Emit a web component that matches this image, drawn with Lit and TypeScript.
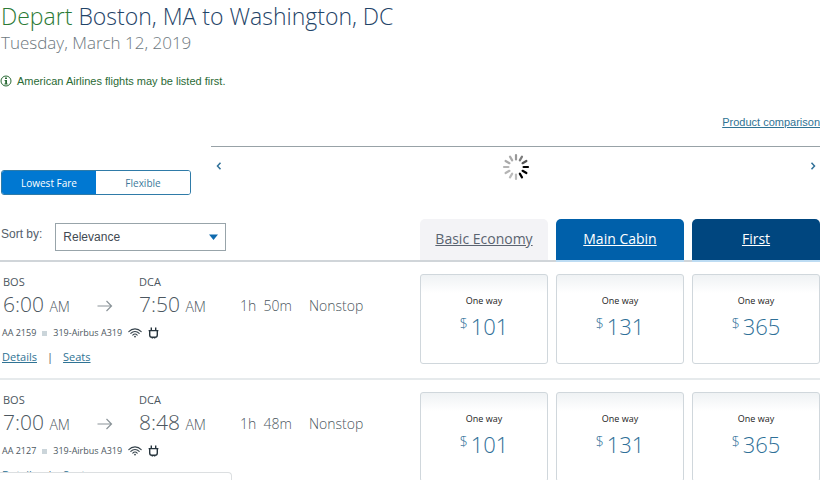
import { LitElement, html, css, svg } from "lit";
import { customElement, property, state } from "lit/decorators.js";
import { classMap } from "lit/directives/class-map.js";

interface Flight {
  from: string;
  to: string;
  departs: string;
  arrives: string;
  duration: string;
  number: string;
  aircraft: string;
  fares: number[];
}

const FLIGHTS: Flight[] = [
  { from: "BOS", to: "DCA", departs: "6:00", arrives: "7:50", duration: "1h  50m", number: "AA 2159", aircraft: "319-Airbus A319", fares: [101, 131, 365] },
  { from: "BOS", to: "DCA", departs: "7:00", arrives: "8:48", duration: "1h  48m", number: "AA 2127", aircraft: "319-Airbus A319", fares: [101, 131, 365] },
];

const CABINS = [
  { name: "Basic Economy", tone: "basic" },
  { name: "Main Cabin", tone: "main" },
  { name: "First", tone: "first" },
];

const SPOKE_COLORS = ["#999", "#7c7c7c", "#555", "#000", "#000", "#000", "#bbb", "#bbb", "#b4b4b4", "#b4b4b4", "#aaa", "#aaa"];

@customElement("flight-row")
export class FlightRow extends LitElement {
  @property({ attribute: false }) flight!: Flight;

  static styles = css`
    :host {
      display: grid;
      grid-template-columns: minmax(0, 1fr) repeat(3, 128px);
      column-gap: 8px;
      align-items: start;
      border-bottom: 2px solid #e6eaec;
      padding: 12px 0;
      color: #4c5760;
    }
    .info { padding-left: 2px; }
    .times {
      display: grid;
      grid-template-columns: 94px 42px 101px 69px auto;
      align-items: end;
      padding-left: 1px;
    }
    .stop { display: flex; flex-direction: column; }
    .code { font-size: 11px; line-height: 16px; }
    .time { font-size: 21px; line-height: 28px; font-weight: 300; white-space: nowrap; }
    .ampm { font-size: 14px; line-height: 20px; }
    .arrow { height: 24px; display: flex; align-items: center; }
    .summary { font-size: 14px; line-height: 24px; font-weight: 300; white-space: pre; }
    .plane {
      display: flex;
      align-items: center;
      gap: 6px;
      margin-top: 5px;
      font-size: 9px;
      line-height: 20px;
    }
    .dot { width: 5px; height: 5px; background: #cbd5da; }
    .links {
      display: flex;
      gap: 10px;
      margin-top: 5px;
      font-size: 11px;
      line-height: 18px;
    }
    a { color: #2f7394; }
    .fare {
      height: 90px;
      padding: 0 0 4px;
      border: 1px solid #d0d7dc;
      border-radius: 3px;
      background: linear-gradient(#eff2f4, #fff 18px);
      font-family: inherit;
      color: #222;
      display: flex;
      flex-direction: column;
      align-items: center;
      justify-content: center;
      cursor: pointer;
    }
    .label { font-size: 9px; line-height: 14px; }
    .price {
      display: flex;
      gap: 3px;
      margin-top: 3px;
      font-size: 22px;
      line-height: 30px;
      font-weight: 300;
      color: #2f7098;
    }
    .currency { font-size: 14px; line-height: 26px; }
  `;

  render() {
    const f = this.flight;
    return html`
      <div class="info">
        <div class="times">
          <div class="stop">
            <span class="code">${f.from}</span>
            <span class="time">${f.departs} <span class="ampm">AM</span></span>
          </div>
          <span class="arrow">
            <svg width="16" height="12" viewBox="0 0 16 12" fill="none" stroke="#8b9499" stroke-width="1.2" aria-hidden="true">
              <path d="M0.5 6H14.5M9.5 1L14.5 6L9.5 11" />
            </svg>
          </span>
          <div class="stop">
            <span class="code">${f.to}</span>
            <span class="time">${f.arrives} <span class="ampm">AM</span></span>
          </div>
          <span class="summary">${f.duration}</span>
          <span class="summary">Nonstop</span>
        </div>
        <div class="plane">
          <span>${f.number}</span>
          <span class="dot"></span>
          <span>${f.aircraft}</span>
          <svg width="14" height="10" viewBox="0 0 14 10" fill="none" stroke="#36434c" stroke-width="1.1" stroke-linecap="round" role="img" aria-label="Wi-Fi">
            <path d="M0.8 3.6C4.2 -0.1 9.8 -0.1 13.2 3.6M2.8 5.4C5.2 2.8 8.8 2.8 11.2 5.4M4.8 7.1C6.1 5.7 7.9 5.7 9.2 7.1" />
            <circle cx="7" cy="8.6" r="0.9" fill="#36434c" stroke="none" />
          </svg>
          <svg width="11" height="12" viewBox="0 0 11 12" fill="none" stroke="#27343d" stroke-width="1.4" role="img" aria-label="Power outlet">
            <path d="M3.3 0.6V3.4M7.7 0.6V3.4M0.6 3.6H10.4M1.7 3.6V8Q1.7 10.2 3.9 10.2H7.1Q9.3 10.2 9.3 8V3.6M4.4 10.2V11.4M6.6 10.2V11.4" />
          </svg>
        </div>
        <div class="links">
          <a href="#details">Details</a><span>|</span><a href="#seats">Seats</a>
        </div>
      </div>
      ${f.fares.map(
        (amount) => html`<button class="fare" type="button">
          <span class="label">One way</span>
          <span class="price"><span class="currency">$</span>${amount}</span>
        </button>`
      )}
    `;
  }
}

@customElement("app-root")
export class AppRoot extends LitElement {
  @state() private fareType = "Lowest Fare";

  static styles = css`
    :host {
      display: block;
      position: relative;
      height: 100vh;
      overflow: hidden;
      background: #fff;
      color: #54606a;
      font-family: "Open Sans", "Noto Sans", sans-serif;
    }
    h1 { margin: 0; padding-left: 1px; font-size: 23px; line-height: 32px; font-weight: 300; color: #1f4468; }
    .depart { color: #2b7a35; }
    .date { margin: 0; padding-left: 1px; font-size: 17px; line-height: 22px; font-weight: 300; color: #6d787e; }
    .notice {
      display: flex;
      align-items: center;
      gap: 5px;
      margin: 19px 0 0;
      font: 11px/16px "Liberation Sans", Arial, sans-serif;
      color: #2a6a35;
    }
    .compare {
      display: flex;
      justify-content: flex-end;
      margin-top: 25px;
      font: 11px/16px "Liberation Sans", Arial, sans-serif;
    }
    .compare a { color: #2f7394; white-space: nowrap; }
    .dates {
      display: grid;
      grid-template-columns: 191px minmax(0, 1fr);
      column-gap: 20px;
      margin-top: 16px;
    }
    .toggle {
      display: grid;
      grid-template-columns: 1fr 1fr;
      margin: 24px 0 0 1px;
      height: 25px;
      box-sizing: border-box;
      border: 1px solid #2f7ba8;
      border-radius: 3px;
      overflow: hidden;
    }
    .option {
      border: 0;
      padding: 0;
      background: #fff;
      color: #3d789b;
      font: 10px/16px "Open Sans", "Noto Sans", sans-serif;
      cursor: pointer;
    }
    .option.on { background: #0078d2; color: #fff; font-weight: 500; }
    .carousel {
      display: flex;
      align-items: flex-start;
      justify-content: space-between;
      border-top: 1px solid #98a2a7;
      padding: 6px 3px 0 4px;
    }
    .nav { display: flex; align-items: center; height: 26px; padding: 0; border: 0; background: none; cursor: pointer; }
    .bar {
      display: grid;
      grid-template-columns: minmax(0, 1fr) repeat(3, 128px);
      column-gap: 8px;
      margin-top: 24px;
      border-bottom: 2px solid #d0d5d9;
    }
    .sort {
      display: flex;
      gap: 13px;
      padding-left: 1px;
      font: 12px/16px "Liberation Sans", Arial, sans-serif;
    }
    .sort label { padding-top: 7px; }
    .picker { display: grid; align-self: flex-start; margin-top: 4px; width: 171px; align-items: center; justify-items: end; }
    .picker > * { grid-area: 1 / 1; }
    .picker svg { margin-right: 8px; pointer-events: none; }
    select {
      appearance: none;
      width: 100%;
      height: 28px;
      padding: 0 7px;
      border: 1px solid #98a4aa;
      border-radius: 0;
      background: #fff;
      color: #3f4a52;
      font: inherit;
    }
    .cabin {
      display: flex;
      align-items: center;
      justify-content: center;
      height: 41px;
      padding-bottom: 1px;
      box-sizing: border-box;
      border-radius: 5px 5px 0 0;
      font-size: 14px;
      line-height: 20px;
      color: #fff;
    }
    .basic { background: #f3f3f6; color: #5a6370; }
    .main { background: #0060aa; font-weight: 500; box-shadow: 0 2px #bddcf3; }
    .first { background: #00467f; font-weight: 500; box-shadow: 0 2px #bddcf3; }
    .status {
      position: absolute;
      left: 0;
      bottom: 0;
      width: 232px;
      height: 8px;
      box-sizing: border-box;
      border: 1px solid #dcdfe1;
      border-width: 1px 1px 0 0;
      border-radius: 0 4px 0 0;
      background: #fff;
    }
  `;

  render() {
    return html`
      <h1><span class="depart">Depart</span> Boston, MA to Washington, DC</h1>
      <p class="date">Tuesday, March 12, 2019</p>
      <p class="notice">
        <svg width="12" height="12" viewBox="0 0 12 12" aria-hidden="true">
          <circle cx="6" cy="6" r="5" fill="none" stroke="#2a6a35" />
          <path d="M5 2.5H7V4H5ZM4.6 5H7V8.4H7.6V9.4H4.4V8.4H5.2V6H4.6Z" fill="#2a6a35" />
        </svg>
        American Airlines flights may be listed first.
      </p>
      <div class="compare"><a href="#compare">Product comparison</a></div>
      <section class="dates">
        <div class="toggle" role="group" aria-label="Fare type">
          ${["Lowest Fare", "Flexible"].map(
            (name) => html`<button
              type="button"
              class=${classMap({ option: true, on: this.fareType === name })}
              aria-pressed=${this.fareType === name}
              @click=${() => (this.fareType = name)}
            >${name}</button>`
          )}
        </div>
        <div class="carousel">
          <button class="nav" type="button" aria-label="Earlier dates">
            <svg width="8" height="8" viewBox="0 0 8 8" fill="none" stroke="#2f7098" stroke-width="1.5"><path d="M5.5 0.8L2.5 4L5.5 7.2" /></svg>
          </button>
          <svg width="28" height="28" viewBox="-14 -14 28 28" role="img" aria-label="Loading">
            ${SPOKE_COLORS.map(
              (color, i) => svg`<path d="M0 -7.6V-12" stroke=${color} stroke-width="2.2" stroke-linecap="round" transform="rotate(${i * 30})" />`
            )}
          </svg>
          <button class="nav" type="button" aria-label="Later dates">
            <svg width="8" height="8" viewBox="0 0 8 8" fill="none" stroke="#2f7098" stroke-width="1.5"><path d="M2.5 0.8L5.5 4L2.5 7.2" /></svg>
          </button>
        </div>
      </section>
      <div class="bar">
        <div class="sort">
          <label for="sort">Sort by:</label>
          <div class="picker">
            <select id="sort"><option>Relevance</option></select>
            <svg width="9" height="6" viewBox="0 0 9 6" aria-hidden="true"><path d="M0 0.5H9L4.5 6Z" fill="#0f6aae" /></svg>
          </div>
        </div>
        ${CABINS.map((c) => html`<a href="#${c.tone}" class="cabin ${c.tone}">${c.name}</a>`)}
      </div>
      ${FLIGHTS.map((f) => html`<flight-row .flight=${f}></flight-row>`)}
      <div class="status"></div>
    `;
  }
}
